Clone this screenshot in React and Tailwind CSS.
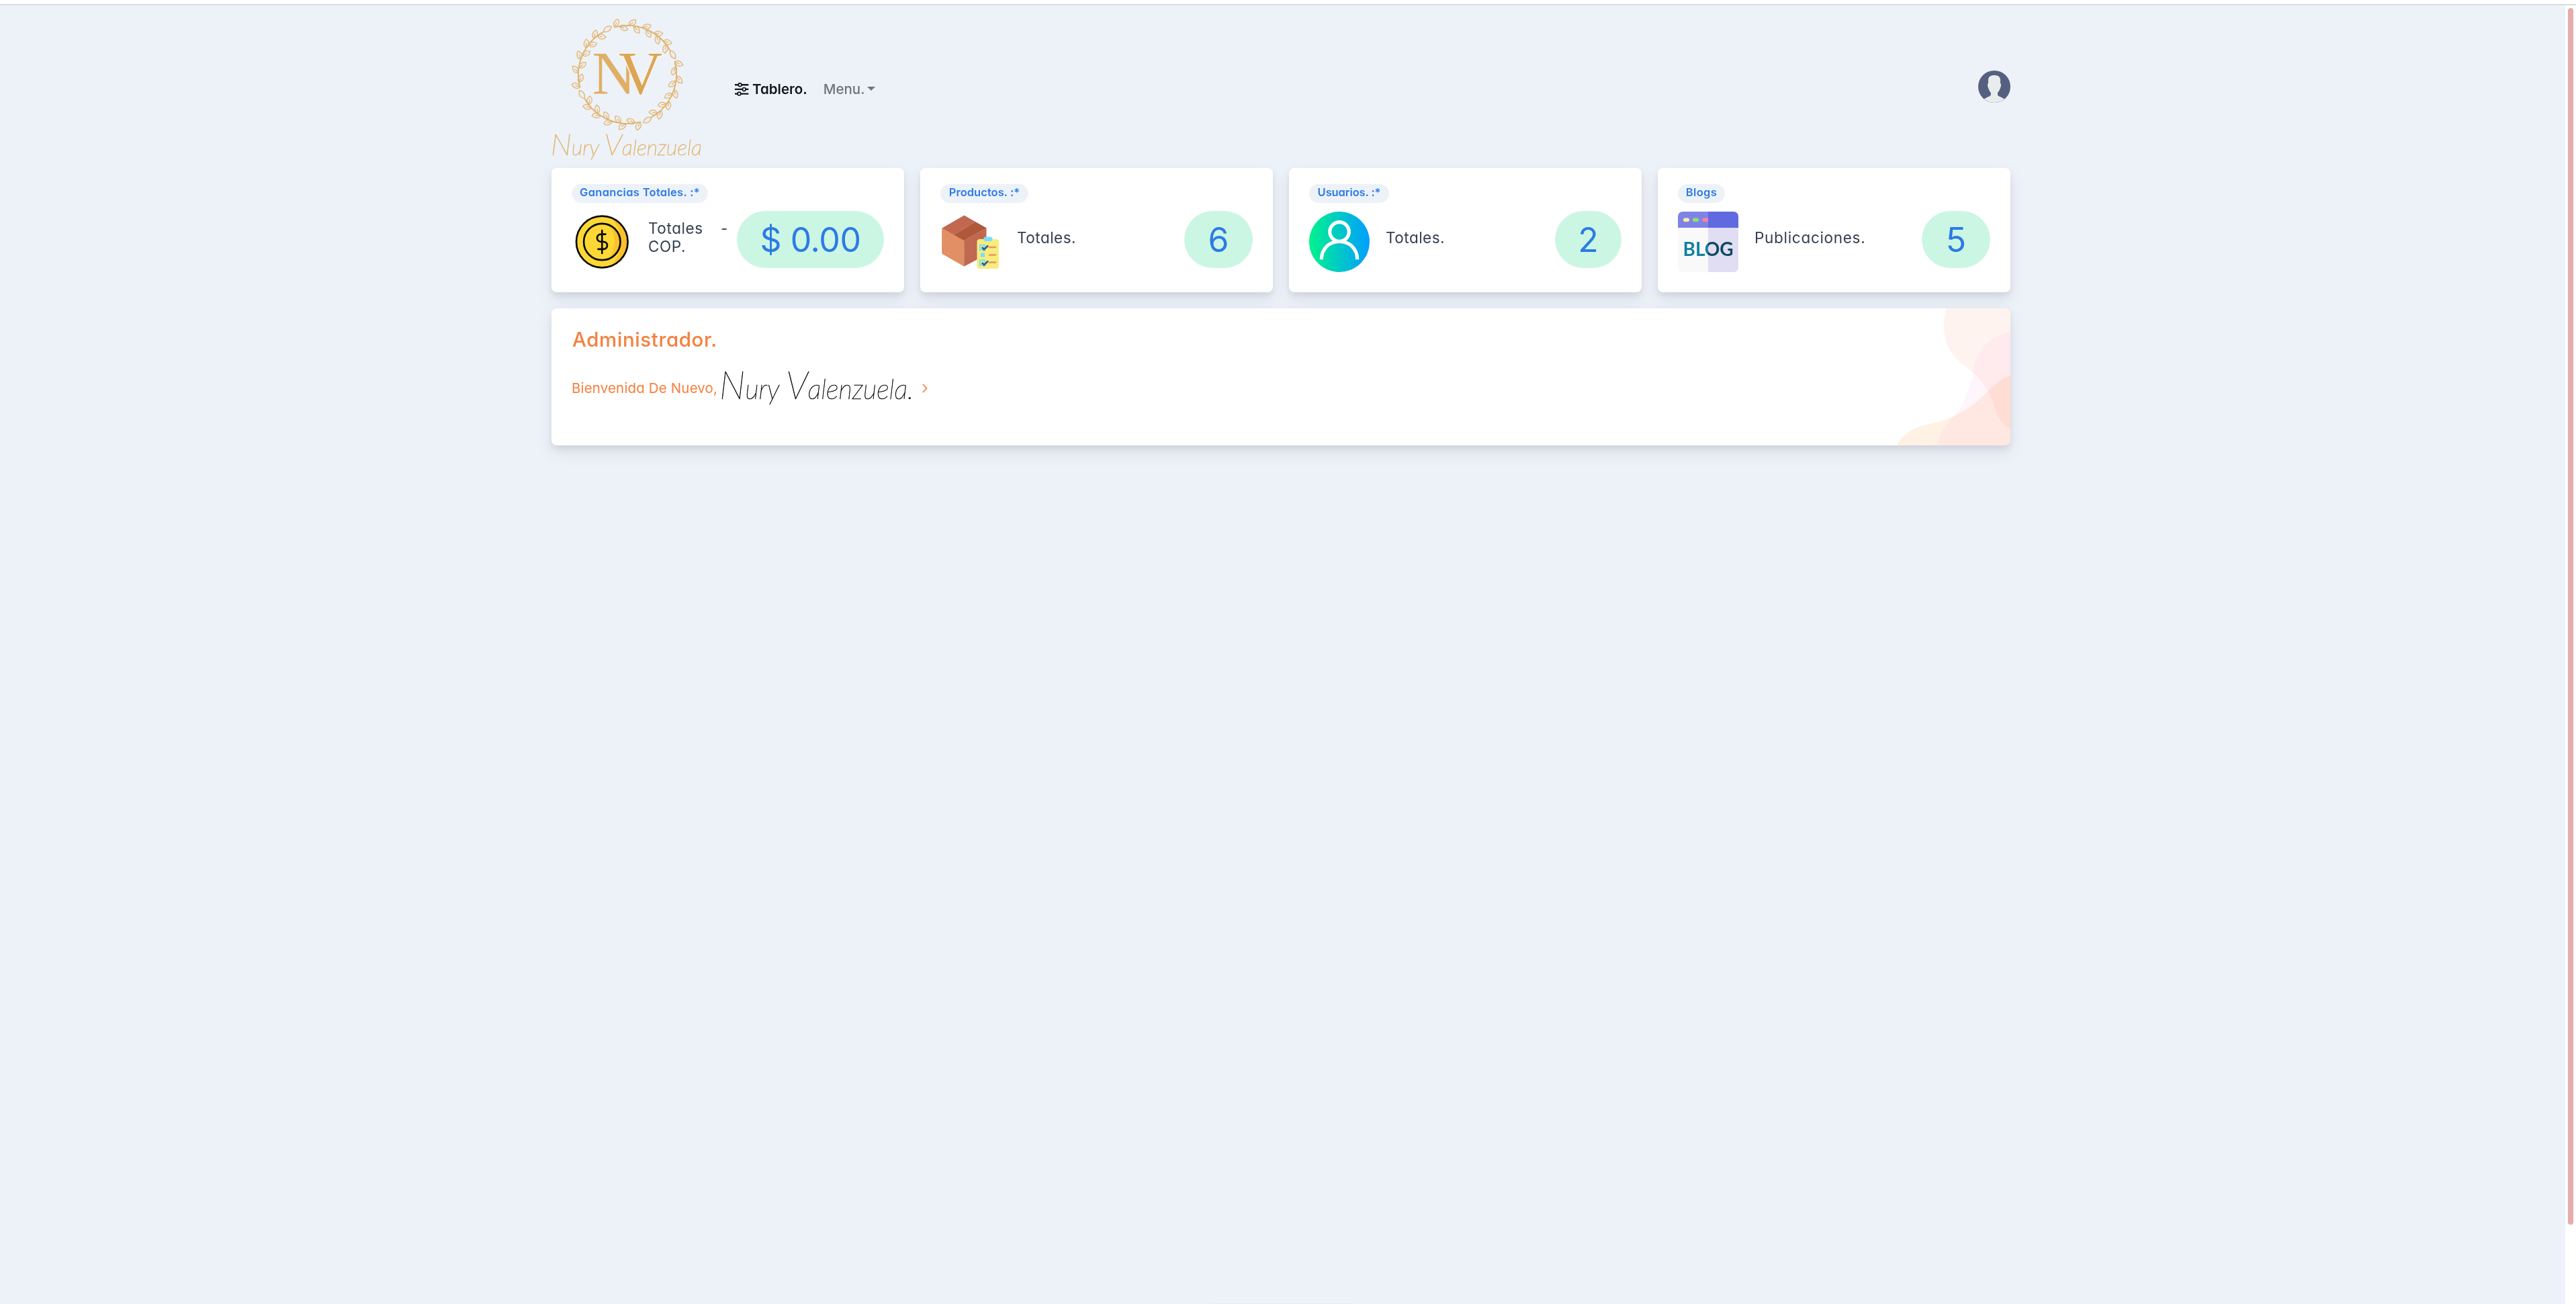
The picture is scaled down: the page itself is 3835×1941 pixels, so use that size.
import React from "react";

const FONT = "font-['Inter',sans-serif] [font-feature-settings:'cv11']";
const SHADOW = "shadow-[0_10.5px_21px_0_rgba(65,69,88,0.1),0_4.5px_9px_0_rgba(0,0,0,0.07)]";

// One quarter of the wreath: [angle of the leaf base, side, tilt from the stem]
const LEAVES = [
  [-105, 1, 48], [-99, -1, 38], [-88, 1, 36], [-82, -1, 52], [-72, 1, 30], [-67, -1, 46],
  [-57, 1, 26], [-53, -1, 50], [-43, 1, 28], [-38, -1, 52], [-29, 0, 0],
];

function WreathQuarter({ turn }) {
  return (
    <g transform={`rotate(${turn})`}>
      <path d="M-18.9 -70.5A73 73 0 0 1 63.8 -35.4" fill="none" stroke="#dfb067" strokeWidth="1.8" strokeLinecap="round" />
      {LEAVES.map(([a, side, tilt]) => (
        <g key={a} transform={`rotate(${a}) translate(73 0) rotate(${90 - side * tilt})`}>
          <path
            d={side === 0 ? "M0 0C4 -6 10 -5 14 -1C10 4 4 4 0 0Z" : "M0 0C2.5 -5 7.5 -5.6 13 -1.6C10.5 4 4.5 4.6 0 0ZM0 0L7.5 -.6"}
            fill="#e0b26814"
            stroke="#e2b46d"
            strokeWidth="1.2"
          />
        </g>
      ))}
    </g>
  );
}

function Logo() {
  return (
    <svg className="block h-[212px] w-[226px] overflow-visible" viewBox="821 28 226 212">
      <g transform="translate(934 111)">
        <WreathQuarter turn={0} />
        <WreathQuarter turn={90} />
        <WreathQuarter turn={180} />
        <WreathQuarter turn={270} />
      </g>
      <g fontFamily="Liberation Serif, serif" fontSize="90">
        <text x="881.5" y="140" fill="#e0af66">N</text>
        <text x="921" y="140" fill="#dda553" stroke="#f6f4f0" strokeWidth="3.5" paintOrder="stroke">V</text>
      </g>
      <text x="820" y="231" fontFamily="Lato, sans-serif" fontStyle="italic" fontWeight="100" fontSize="43" fill="#e2b56f" stroke="#e2b56f" strokeWidth=".9" textLength="225" lengthAdjust="spacingAndGlyphs">
        N<tspan fontSize="31">ury </tspan>V<tspan fontSize="31">alenzuela</tspan>
      </text>
    </svg>
  );
}

function SlidersIcon() {
  return (
    <svg className="h-5 w-[21px]" viewBox="0 0 21 20" fill="#edf2f9" stroke="#14171a">
      <path d="M0 3.2H20.4M0 9.9H20.4M0 16.6H20.4" strokeWidth="2.4" />
      <g strokeWidth="1.7">
        <circle cx="7.6" cy="3.2" r="2.4" />
        <circle cx="13.8" cy="9.9" r="2.4" />
        <circle cx="6.4" cy="16.6" r="2.4" />
      </g>
    </svg>
  );
}

function Avatar() {
  return (
    <svg className="h-12 w-12" viewBox="0 0 48 48">
      <circle cx="24" cy="24" r="24" fill="#556080" />
      <path d="M24 7C29.500 7 33 9.500 33 14V19C34.300 19.500 34.200 24 33 25.500C32.300 28.500 31 30.500 29 33V36.500C29.500 38 35 40 39.400 42.300A24 24 0 0 1 8.600 42.300C13 40 18.300 38 18.800 36.500V33C17 30.500 15.700 28.500 15 25.500C13.800 24 13.700 19.500 15 19V14C15 9.500 18.500 7 24 7Z" fill="#e7eced" />
    </svg>
  );
}

function CoinIcon() {
  return (
    <svg className="h-[90px] w-[90px]" viewBox="0 0 90 90">
      <circle cx="45.300" cy="45" r="38.500" fill="#fdd835" />
      <path d="M57 8.500A38.500 38.500 0 0 1 57 81.500C69 71 73 60 73 45S69 19 57 8.500Z" fill="#fbc02d" />
      <circle cx="45.300" cy="45" r="27" fill="#fdd835" />
      <path d="M54 20A27 27 0 0 1 54 70.500C61 63 64 55 64 45S61 27 54 20Z" fill="#fbc02d" />
      <g fill="none" stroke="#0b0b05" strokeWidth="2.700" strokeLinecap="round">
        <circle cx="45.300" cy="45" r="38.300" />
        <circle cx="45.300" cy="45" r="27.200" />
        <path d="M45.300 28V62M50.500 33.700H44C39.800 33.700 38 36.500 38 39.300S40 44.800 44 44.800H47C51 44.800 53 47.300 53 50.300S51 55.800 47 55.800H39.500" />
      </g>
    </svg>
  );
}

function BoxIcon() {
  return (
    <svg className="h-[90px] w-[90px]" viewBox="0 0 90 90">
      <path d="M2.500 24.500L35.500 5.500L68.500 24.500V64L35.500 81.500L2.500 62.500Z" fill="#c16851" />
      <path d="M2.500 24.500L35.500 43V81.500L2.500 62.500Z" fill="#e28f66" />
      <path d="M20 34.500L52 15.200L68.500 24.500L35.500 43Z" fill="#ad593a" />
      <path d="M20 34.500L52 15.200M35.500 43L68.500 24.500M35.500 43V81.500" stroke="#d48469" strokeWidth=".7" />
      <rect x="54.500" y="41" width="32.500" height="44" rx="4" fill="#f8ec7d" />
      <rect x="64.500" y="37.500" width="13" height="6.500" rx="3.200" fill="#73e0fa" />
      <path d="M59 50h7v7h-7zM59 72.500h7v7h-7z" fill="none" stroke="#7fe4e8" strokeWidth="2.500" />
      <rect x="60" y="61.500" width="6" height="6" fill="#73e0fa" />
      <path d="M62 53l3 3.500L71 50.500M62 76l3 3.500L71 73.500" fill="none" stroke="#386185" strokeWidth="2.700" />
      <path d="M73 53h9M73 64.500h9M73 75.500h9" stroke="#e59668" strokeWidth="2.700" strokeLinecap="round" />
    </svg>
  );
}

function UserIcon() {
  return (
    <svg className="h-[90px] w-[90px]" viewBox="0 0 90 90">
      <defs>
        <linearGradient id="user-gradient">
          <stop offset="0" stopColor="#00f38d" />
          <stop offset="1" stopColor="#009eff" />
        </linearGradient>
      </defs>
      <circle cx="45" cy="45" r="45" fill="url(#user-gradient)" />
      <g fill="none" stroke="#fff" strokeWidth="5.200">
        <circle cx="45" cy="30" r="14.300" />
        <path d="M18.300 71.300C18.300 55 30 44.500 45 44.500S71.700 55 71.700 71.300" />
      </g>
    </svg>
  );
}

function BlogIcon() {
  return (
    <svg className="h-[90px] w-[90px]" viewBox="0 0 90 90">
      <defs>
        <clipPath id="blog-frame"><rect width="90" height="90" rx="7" /></clipPath>
        <linearGradient id="blog-ink" gradientUnits="userSpaceOnUse" x1="0" x2="90" y1="0" y2="0">
          <stop offset=".5" stopColor="#12809f" />
          <stop offset=".5" stopColor="#0d4a60" />
        </linearGradient>
      </defs>
      <g clipPath="url(#blog-frame)">
        <path d="M0 0h45v90H0z" fill="#f9f9fa" />
        <path d="M45 0h45v90H45z" fill="#e1ddf2" />
        <path d="M0 0h45v24H0z" fill="#7f83e6" />
        <path d="M45 0h45v24H45z" fill="#5f69e0" />
      </g>
      <rect x="8" y="9.500" width="9" height="5.500" rx="2.700" fill="#fff0a0" />
      <rect x="22" y="9.500" width="9" height="5.500" rx="2.700" fill="#8fe36f" />
      <path d="M45 9.500H39a2.750 2.750 0 0 0 0 5.500H45z" fill="#ff7fa3" />
      <text x="7.500" y="66" fontFamily="Lato, sans-serif" fontWeight="700" fontSize="28.500" textLength="75" lengthAdjust="spacingAndGlyphs" fill="url(#blog-ink)">BLOG</text>
    </svg>
  );
}

const CARDS = [
  { badge: "Ganancias Totales. :*", badgeClass: "w-[203px] tracking-[0.3px]", Icon: CoinIcon, label: "Totales - COP.", labelClass: "w-[119px] tracking-[0.6px]", value: "$ 0.00", pill: "w-[219px] tracking-[-0.4px]" },
  { badge: "Productos. :*", badgeClass: "w-[131px] tracking-[0.05px]", Icon: BoxIcon, label: "Totales.", labelClass: "tracking-[0.5px]", value: "6", pill: "w-[102px]" },
  { badge: "Usuarios. :*", badgeClass: "w-[119px] tracking-[-0.1px]", Icon: UserIcon, label: "Totales.", labelClass: "tracking-[0.5px]", value: "2", pill: "w-[99px]" },
  { badge: "Blogs", badgeClass: "w-[70px] tracking-[0.35px]", Icon: BlogIcon, label: "Publicaciones.", labelClass: "tracking-[0.7px]", value: "5", pill: "w-[102px]" },
];

function StatCard({ badge, badgeClass, Icon, label, labelClass, value, pill }) {
  return (
    <div className={`h-[185px] rounded-lg bg-white px-[30px] pt-6 ${SHADOW}`}>
      <div className={`flex h-7 items-center justify-center rounded-full bg-[#edf2f9] pb-1 text-[16.5px] leading-6 font-semibold whitespace-nowrap text-[#2c7be5] ${badgeClass}`}>
        {badge}
      </div>
      <div className="mt-3 flex items-start">
        <div className="mt-px"><Icon /></div>
        <div className="ml-6 flex h-[78px] items-center">
          <p className={`text-justify text-[22.5px] leading-[27px] text-[#344050] ${labelClass}`}>{label}</p>
        </div>
        <div className={`ml-auto flex h-[85px] items-center justify-center rounded-full bg-[#ccf6e4] text-[50px] leading-none font-[370] text-[#2c7be5] ${pill}`}>
          {value}
        </div>
      </div>
    </div>
  );
}

function CornerShapes() {
  return (
    <svg className="h-full w-[173px]" viewBox="120 57 519 612" preserveAspectRatio="none">
      <g className="mix-blend-multiply">
        <path d="M352 57C340 100 340 150 348 190C358 250 392 277 430 310C472 343 505 370 540 430C565 475 562 490 580 530C595 562 615 585 639 598V57Z" fill="#fff3f0" />
      </g>
      <g className="mix-blend-multiply">
        <path d="M639 162C560 175 490 235 475 320C462 400 440 470 395 530C360 575 320 600 318 669H639Z" fill="#fff6fc" />
      </g>
      <g className="mix-blend-multiply">
        <path d="M130 669C150 630 200 590 265 576C345 560 420 535 500 463C560 412 590 370 639 358V669Z" fill="#fff1e4" />
      </g>
    </svg>
  );
}

export default function App() {
  return (
    <div className={`flex h-[1941px] w-full flex-col overflow-hidden bg-white ${FONT}`}>
      <div className="mt-1.5 h-0.5 shrink-0 bg-[#d9dddf]" />
      <div className="flex min-h-0 flex-1">
        <main className="flex flex-1 flex-col items-center bg-[#edf2f9] pr-[5px]">
          <div className="flex w-[2172px] flex-1 flex-col">
            <nav className="flex h-[242px] items-start">
              <div className="pt-5"><Logo /></div>
              <div className="ml-[47px] flex h-[249px] items-center">
                <SlidersIcon />
                <span className="ml-[5px] pt-0.5 text-[20.5px] font-semibold text-[#14171a]">Tablero.</span>
                <span className="ml-6 pt-0.5 text-[20.5px] font-medium text-[#717479]">Menu.</span>
                <svg className="mb-0.5 ml-1 h-[6px] w-3" viewBox="0 0 12 6"><path d="M0 0H12L6 6Z" fill="#717479" /></svg>
              </div>
              <div className="mt-[97px] ml-auto"><Avatar /></div>
            </nav>
            <section className="grid grid-cols-4 gap-6">
              {CARDS.map((card) => <StatCard key={card.badge} {...card} />)}
            </section>
            <section className={`mt-6 flex h-[204px] justify-between overflow-hidden rounded-lg bg-white text-[#f5803e] ${SHADOW}`}>
              <div className="pt-[27px] pl-[30px]">
                <h1 className="ml-px text-[29.5px] leading-[38px] font-medium tracking-[0.6px]">Administrador.</h1>
                <div className="mt-6 flex h-[60px] items-center">
                  <span className="text-[20.5px] tracking-[0.15px]">Bienvenida De Nuevo,</span>
                  <svg className="ml-0.5 h-[60px] w-[291px] overflow-visible" viewBox="0 0 291 60">
                    <text x="1" y="46" fontFamily="Lato, sans-serif" fontStyle="italic" fontWeight="100" fontSize="58" fill="#111" stroke="#111" strokeWidth=".7" textLength="289" lengthAdjust="spacingAndGlyphs">
                      N<tspan fontSize="42">ury </tspan>V<tspan fontSize="42">alenzuela.</tspan>
                    </text>
                  </svg>
                  <svg className="ml-3 h-[14px] w-2" viewBox="0 0 8 14"><path d="M1 1L6.500 7L1 13" fill="none" stroke="#f5803e" strokeWidth="1.800" /></svg>
                </div>
              </div>
              <CornerShapes />
            </section>
            <div className="mx-auto mt-auto h-px w-[216px] bg-[#e8ebf5]" />
          </div>
        </main>
        <div className="flex w-4 justify-center bg-white pt-1">
          <div className="h-[1811px] w-2 rounded-full bg-[#e6acac]" />
        </div>
      </div>
    </div>
  );
}
